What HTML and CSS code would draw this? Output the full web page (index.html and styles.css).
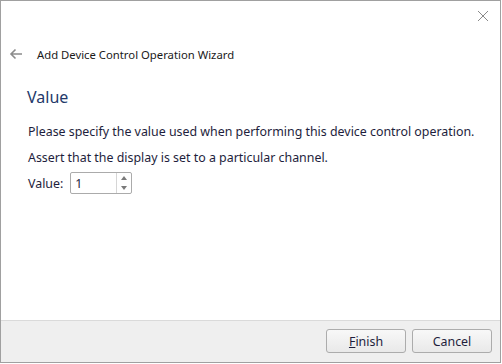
FILE: index.html
```html
<!DOCTYPE html>
<html lang="en">
<head>
  <meta charset="UTF-8" />
  <title>Add Device Control Operation Wizard</title>
  <link rel="stylesheet" href="styles.css">
</head>
<body>

  <div class="window">
    <div class="titlebar">
      <button class="close" title="Close">
        <svg width="12" height="12" viewBox="0 0 12 12"><path d="M1 1 L11 11 M11 1 L1 11" stroke="#8a8a8a" stroke-width="1" fill="none"/></svg>
      </button>
    </div>

    <div class="header">
      <span class="back">
        <svg width="14" height="12" viewBox="0 0 14 12"><path d="M13 6 H2 M6.5 1.5 L2 6 L6.5 10.5" stroke="#8c8c8c" stroke-width="1.6" fill="none"/></svg>
      </span>
      <span class="title">Add Device Control Operation Wizard</span>
    </div>

    <!-- Wizard page -->
    <div class="page">
      <h2>Value</h2>
      <p>Please specify the value used when performing this device control operation.</p>
      <p class="last">Assert that the display is set to a particular channel.</p>
      <div class="field">
        <label for="value">Value:</label>
        <div class="spin">
          <input type="text" id="value" value="1" />
          <div class="spin-btns">
            <span class="up"></span>
            <span class="down"></span>
          </div>
        </div>
      </div>
    </div>

    <div class="footer">
      <button class="btn"><u>F</u>inish</button>
      <button class="btn">Cancel</button>
    </div>
  </div>

</body>
</html>
```

FILE: styles.css
```css
body {
  margin: 0;
  font-family: "Noto Sans", Arial, sans-serif;
  font-size: 12px;
  background-color: #ffffff;
}

.window {
  width: 501px;
  height: 363px;
  box-sizing: border-box;
  border: 1px solid #a0a0a0;
  background-color: #ffffff;
  display: flex;
  flex-direction: column;
}

.titlebar {
  height: 29px;
  display: flex;
  justify-content: flex-end;
}

.close {
  border: none;
  background: none;
  padding: 0;
  width: 32px;
  height: 29px;
  margin-right: 1px;
  display: flex;
  align-items: center;
  justify-content: center;
}

.header {
  height: 48px;
  display: flex;
  align-items: center;
  padding-left: 8px;
}

.back {
  width: 28px;
  display: flex;
}

.title {
  color: #1a1a1a;
  font-size: 11.3px;
}

.page {
  flex: 1;
  padding: 8px 0 0 26px;
  color: #1e1e3c;
  white-space: nowrap;
}

h2 {
  margin: 0 0 15px 0;
  font-size: 16px;
  font-weight: normal;
  color: #23396a;
}

p {
  margin: 0 0 8px 1px;
  font-size: 12.4px;
  line-height: 18px;
}

p.last {
  margin-bottom: 5px;
}

.field {
  display: flex;
  align-items: center;
  gap: 7px;
  margin-left: 1px;
  font-size: 12.4px;
}

.spin {
  display: flex;
  width: 62px;
  height: 22px;
  box-sizing: border-box;
  border: 1px solid #ababab;
  border-radius: 2px;
  background-color: #fff;
}

.spin input {
  flex: 1;
  width: 0;
  border: none;
  outline: none;
  padding: 0 4px;
  font-family: inherit;
  font-size: 12.4px;
  color: #1e1e3c;
  background: transparent;
}

.spin-btns {
  width: 14px;
  border-left: 1px solid #d6d6d6;
  display: flex;
  flex-direction: column;
}

.spin-btns span {
  flex: 1;
  display: flex;
  align-items: center;
  justify-content: center;
}

.spin-btns .up::before {
  content: "";
  border-left: 3px solid transparent;
  border-right: 3px solid transparent;
  border-bottom: 4px solid #7a7a7a;
}

.spin-btns .down::before {
  content: "";
  border-left: 3px solid transparent;
  border-right: 3px solid transparent;
  border-top: 4px solid #7a7a7a;
}

.footer {
  height: 42px;
  box-sizing: border-box;
  border-top: 1px solid #dadada;
  background-color: #efefef;
  display: flex;
  justify-content: flex-end;
  align-items: flex-start;
  gap: 6px;
  padding: 8px 8px 0 0;
}

.btn {
  width: 80px;
  height: 24px;
  border: 1px solid #acacac;
  border-radius: 3px;
  background: linear-gradient(#f8f8f8, #e9e9e9);
  font-family: inherit;
  font-size: 12.4px;
  color: #1e1e3c;
  padding: 0;
}
```
